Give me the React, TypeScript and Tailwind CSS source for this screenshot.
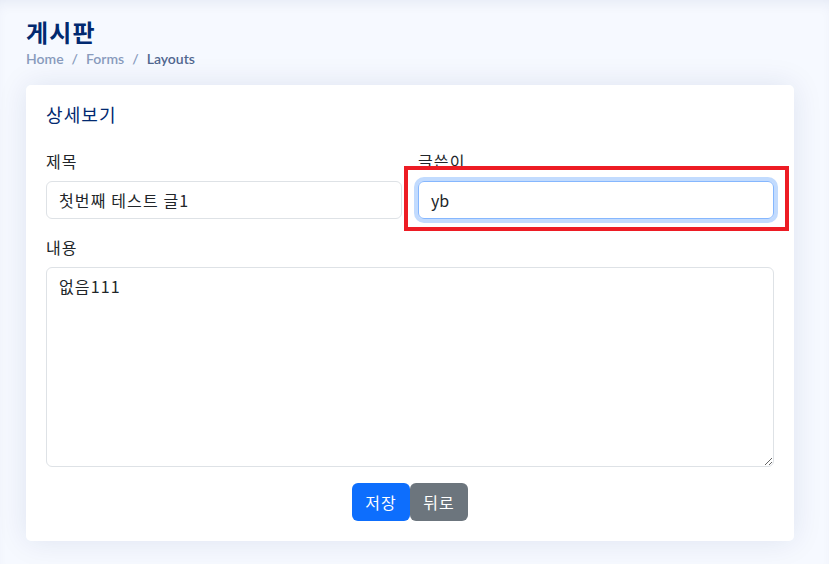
import React from "react";

export default function App() {
  return (
    <div className="min-h-[564px] w-full bg-[#f6f9ff] pl-[26px] pr-[35px] pt-[14px] pb-[23px] font-['Noto_Sans_CJK_KR',sans-serif] tracking-[0.07em] shadow-[inset_0_8px_14px_-6px_rgba(1,41,112,0.08)]">
      <div className="mb-[17px]">
        <h1 className="text-[24px] leading-[36px] font-bold text-[#012970]">게시판</h1>
        <nav className="flex items-center gap-[8px] font-['Lato','Open_Sans',sans-serif] text-[14px] leading-[18px] font-semibold tracking-normal text-[#899bbd]">
          <span>Home</span>
          <span>/</span>
          <span>Forms</span>
          <span>/</span>
          <span className="text-[#51678f]">Layouts</span>
        </nav>
      </div>

      <div className="relative rounded-[5px] bg-white px-[20px] pb-[20px] shadow-[0_0_30px_rgba(1,41,112,0.1)]">
        <h5 className="pt-[18px] pb-[24px] text-[18px] leading-[22px] text-[#012970]">상세보기</h5>

        <div className="grid grid-cols-2 gap-x-[16px]">
          <div>
            <label className="mb-[8px] block text-[16px] leading-[24px] text-[#212529]">제목</label>
            <div className="flex h-[38px] items-center rounded-[6px] border border-[#dee2e6] px-[12px] text-[16px] text-[#212529]">
              첫번째 테스트 글1
            </div>
          </div>
          <div className="relative">
            <label className="mb-[8px] block text-[16px] leading-[24px] text-[#212529]">글쓴이</label>
            <div className="flex h-[38px] items-center rounded-[6px] border border-[#86b7fe] px-[12px] text-[16px] tracking-normal text-[#212529] shadow-[0_0_0_4px_rgba(13,110,253,0.25)]">
              yb
            </div>
            <div className="pointer-events-none absolute left-[-14px] right-[-15px] top-[17px] h-[65px] border-[4px] border-[#ed1c24]" />
          </div>
        </div>

        <div className="mt-[16px]">
          <label className="mb-[8px] block text-[16px] leading-[24px] text-[#212529]">내용</label>
          <textarea
            className="block h-[200px] w-full resize-y rounded-[6px] border border-[#dee2e6] px-[12px] py-[6px] text-[16px] leading-[24px] text-[#212529] outline-none"
            defaultValue="없음111"
          />
        </div>

        <div className="mt-[16px] flex justify-center">
          <button className="h-[38px] w-[58px] rounded-[6px] bg-[#0d6efd] text-[16px] text-white">저장</button>
          <button className="h-[38px] w-[58px] rounded-[6px] bg-[#6c757d] text-[16px] text-white">뒤로</button>
        </div>
      </div>
    </div>
  );
}
